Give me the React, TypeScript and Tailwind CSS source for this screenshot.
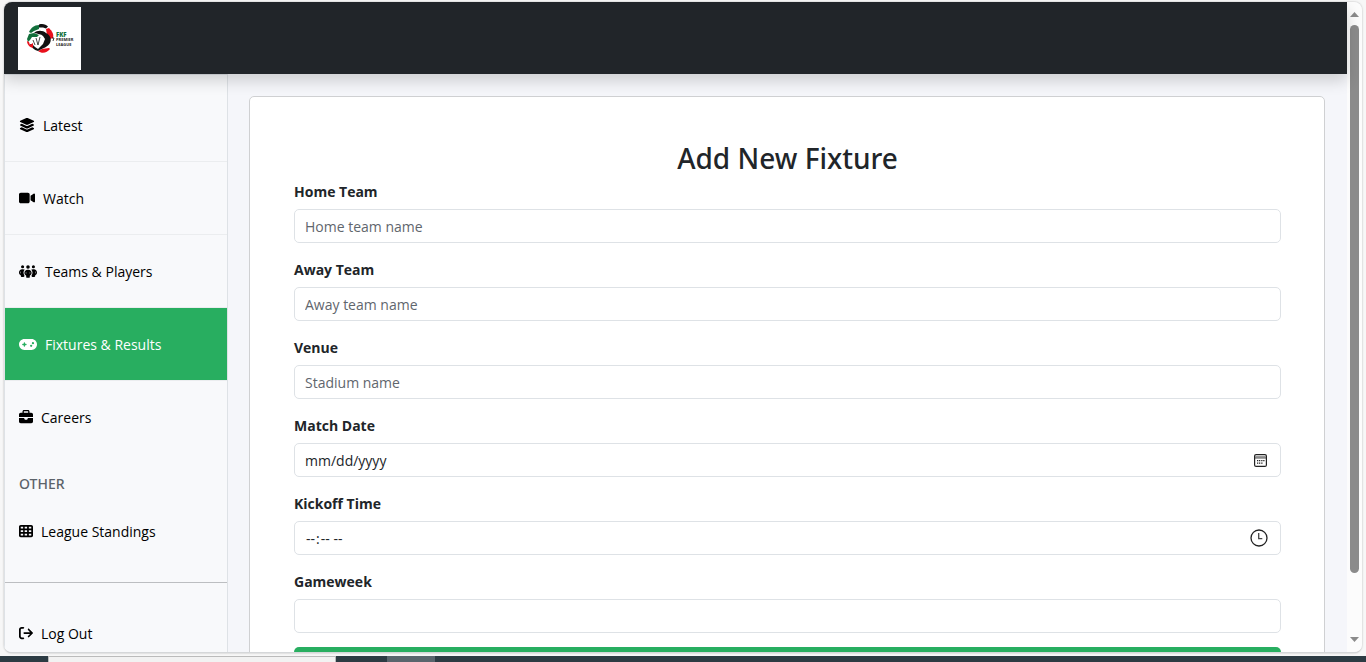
import React from "react";
import type { ComponentType, ReactNode } from "react";
import {
  FaArrowRightFromBracket,
  FaBriefcase,
  FaGamepad,
  FaLayerGroup,
  FaPeopleGroup,
  FaTableCells,
  FaVideo,
} from "react-icons/fa6";

type Icon = ComponentType<{ className?: string }>;

function LeagueLogo() {
  return (
    <svg viewBox="0 0 63 63" className="size-[63px] bg-white" role="img" aria-label="FKF Premier League">
      <path d="M11 25c2-4 5-7 10-7l0 4-5 2-3 2z" fill="#12703c" />
      <path d="M21 17.5c4-1 7 0 9 2l-2 2-3-1-4 0z" fill="#111" />
      <path d="M28 22l3-1c3 3 5 6 4 10l-3 1-3-4z" fill="#e8101c" />
      <path d="M20 44l4-2 7-1 1 1c-3 4-8 5-12 2z" fill="#e8101c" />
      <path d="M16 26c3-3 9-3 12 0 4 2 6 6 4 10-2 4-7 5-12 8-4-1-7-4-8-7l2 0 3 3 3 2 5-5 2-5-2-3c-2-2-5-2-9-3z" fill="#111" />
      <path d="M34 31l2 0-1 3" fill="none" stroke="#111" strokeWidth="0.8" />
      <path d="M9 32l2-5 5-1 5 2-2 2-5 0-2 3-2 2z" fill="#12703c" />
      <path d="M9 34l2 1 1 3 3-2 0 5c-4-1-6-4-6-7z" fill="#e8101c" />
      <path d="M15 33l2 5M18 31l2 7M22 30l-2 8" stroke="#333" strokeWidth="0.9" fill="none" />
      <text x="38" y="30" fill="#12703c" className="font-['Open_Sans',sans-serif] text-[6px] font-extrabold">FKF</text>
      <text x="38" y="34" fill="#222" className="font-['Open_Sans',sans-serif] text-[4px] font-bold">PREMIER</text>
      <text x="38" y="39" fill="#222" className="font-['Open_Sans',sans-serif] text-[4px] font-bold">LEAGUE</text>
    </svg>
  );
}

function NavItem({ icon: IconGlyph, iconClass, label, active = false, last = false }: {
  icon: Icon;
  iconClass: string;
  label: string;
  active?: boolean;
  last?: boolean;
}) {
  return (
    <li className={last ? "" : "border-b border-[#ebedef]"}>
      <a
        href="#"
        aria-current={active ? "page" : undefined}
        className={`flex h-[72px] items-center gap-2 px-[14px] ${active ? "bg-[#28ae60] text-white" : "text-black"}`}
      >
        <IconGlyph className={iconClass} />
        {label}
      </a>
    </li>
  );
}

function Field({ id, label, type = "text", placeholder, children }: {
  id: string;
  label: string;
  type?: string;
  placeholder?: string;
  children?: ReactNode;
}) {
  return (
    <div>
      <label htmlFor={id} className="mb-[6px] block leading-[22px] font-bold">{label}</label>
      <div className="relative">
        <input
          id={id}
          type={type}
          placeholder={placeholder}
          className="block h-[34px] w-full rounded-[5px] border border-[#dee2e6] bg-white px-[10px] outline-none placeholder:text-[#5f666d] [&::-webkit-calendar-picker-indicator]:opacity-0 [&::-webkit-datetime-edit-day-field]:p-0 [&::-webkit-datetime-edit-month-field]:p-0 [&::-webkit-datetime-edit-year-field]:p-0"
        />
        {children}
      </div>
    </div>
  );
}

function CalendarIcon() {
  return (
    <svg viewBox="0 0 13 13" className="pointer-events-none absolute top-[11px] right-[14px] size-[13px]" aria-hidden="true">
      <rect x="0.6" y="0.6" width="11.8" height="11.8" rx="1.5" fill="none" stroke="#222" strokeWidth="1.2" />
      <path d="M1 2h11v1.5H1z" fill="#999" />
      <path d="M1 4h11" stroke="#222" strokeWidth="0.8" />
      <path d="M5 6h1.3v1.3H5zM7.2 6h1.3v1.3H7.2zM9.2 6h1.3v1.3H9.2zM3 6h1.3v1.3H3zM3 8.5h1.3v1.3H3zM5 8.5h1.3v1.3H5zM7.2 8.5h1.3v1.3H7.2z" fill="#222" />
    </svg>
  );
}

function ClockIcon() {
  return (
    <svg viewBox="0 0 18 18" className="pointer-events-none absolute top-[8px] right-[13px] size-[18px]" fill="none" aria-hidden="true">
      <circle cx="9" cy="9" r="8" stroke="#222" strokeWidth="1.3" />
      <path d="M8.7 4v5.7h3.6" stroke="#444" strokeWidth="1.3" />
    </svg>
  );
}

function ScrollRail() {
  return (
    <div className="flex w-[15px] shrink-0 flex-col items-center bg-[#fcfcfc] py-[10px]" aria-hidden="true">
      <svg viewBox="0 0 9 5" className="h-[5px] w-[9px] shrink-0" fill="#8b8b8b"><path d="M0 5L4.5 0 9 5z" /></svg>
      <div className="mt-2 h-[87%] w-[9px] rounded-full bg-[#8b8b8b]" />
      <svg viewBox="0 0 9 5" className="mt-auto h-[5px] w-[9px] shrink-0" fill="#8b8b8b"><path d="M0 0h9L4.5 5z" /></svg>
    </div>
  );
}

export default function App() {
  return (
    <div className="flex h-screen flex-col bg-[#f7f7f7] font-['Open_Sans','Noto_Sans',sans-serif] text-[14px] text-[#212529]">
      <div className="mx-1 mt-0.5 mb-[3px] flex min-h-0 flex-1 overflow-hidden rounded-lg border-b border-[#d5d7d9] bg-[#f5f6fa] shadow-[0_0_2px_rgba(0,0,0,0.3)]">
        <div className="flex min-w-0 flex-1 flex-col">
          <header className="relative z-10 flex h-[72px] shrink-0 items-center bg-[#212529] px-[14px] shadow-[0_7px_14px_rgba(0,0,0,0.16)]">
            <a href="#"><LeagueLogo /></a>
          </header>
          <div className="flex min-h-0 flex-1">
            <aside className="w-56 shrink-0 overflow-hidden border border-b-0 border-[#dee2e6] bg-[#f8f9fb] pt-[14px]">
              <nav>
                <ul>
                  <NavItem icon={FaLayerGroup} iconClass="size-4" label="Latest" />
                  <NavItem icon={FaVideo} iconClass="size-4" label="Watch" />
                  <NavItem icon={FaPeopleGroup} iconClass="h-[15px] w-[18px]" label="Teams & Players" />
                  <NavItem icon={FaGamepad} iconClass="h-[15px] w-[18px]" label="Fixtures & Results" active />
                  <NavItem icon={FaBriefcase} iconClass="size-[14px]" label="Careers" last />
                </ul>
                <h2 className="mt-5 px-[14px] font-['Noto_Sans',sans-serif] leading-[22px] font-medium text-[#5c636a]">OTHER</h2>
                <a href="#" className="mt-2 flex h-14 items-center gap-2 px-[14px] text-black">
                  <FaTableCells className="size-[14px]" />League Standings
                </a>
                <hr className="mt-[23px] border-[#bcbec1]" />
                <a href="#" className="mt-[14px] flex h-[72px] items-center gap-2 px-[14px] text-black">
                  <FaArrowRightFromBracket className="size-[14px]" />Log Out
                </a>
              </nav>
            </aside>
            <main className="min-w-0 flex-1 overflow-hidden pt-[22px] pr-[22px] pl-[21px]">
              <form className="rounded-[5px] border border-[#cfd0d2] bg-white py-11 pr-[43px] pl-11">
                <h1 className="mb-[6px] text-center font-['Noto_Sans',sans-serif] text-[28px] leading-[34px] font-medium">Add New Fixture</h1>
                <div className="mb-[14px] flex flex-col gap-4">
                  <Field id="home" label="Home Team" placeholder="Home team name" />
                  <Field id="away" label="Away Team" placeholder="Away team name" />
                  <Field id="venue" label="Venue" placeholder="Stadium name" />
                  <Field id="date" label="Match Date" type="date"><CalendarIcon /></Field>
                  <Field id="time" label="Kickoff Time" type="time"><ClockIcon /></Field>
                  <Field id="gameweek" label="Gameweek" type="number" />
                </div>
                <button type="submit" aria-label="Add fixture" className="block h-[34px] w-full rounded-[5px] bg-[#28ae60]" />
              </form>
            </main>
          </div>
        </div>
        <ScrollRail />
      </div>
      <div className="flex h-[6px] shrink-0 bg-[#2c3b43]" aria-hidden="true">
        <div className="ml-12 w-72 border border-b-0 border-[#bbb] bg-[#f2f2f2]" />
        <div className="ml-[51px] w-12 bg-[#59656d]" />
      </div>
    </div>
  );
}
